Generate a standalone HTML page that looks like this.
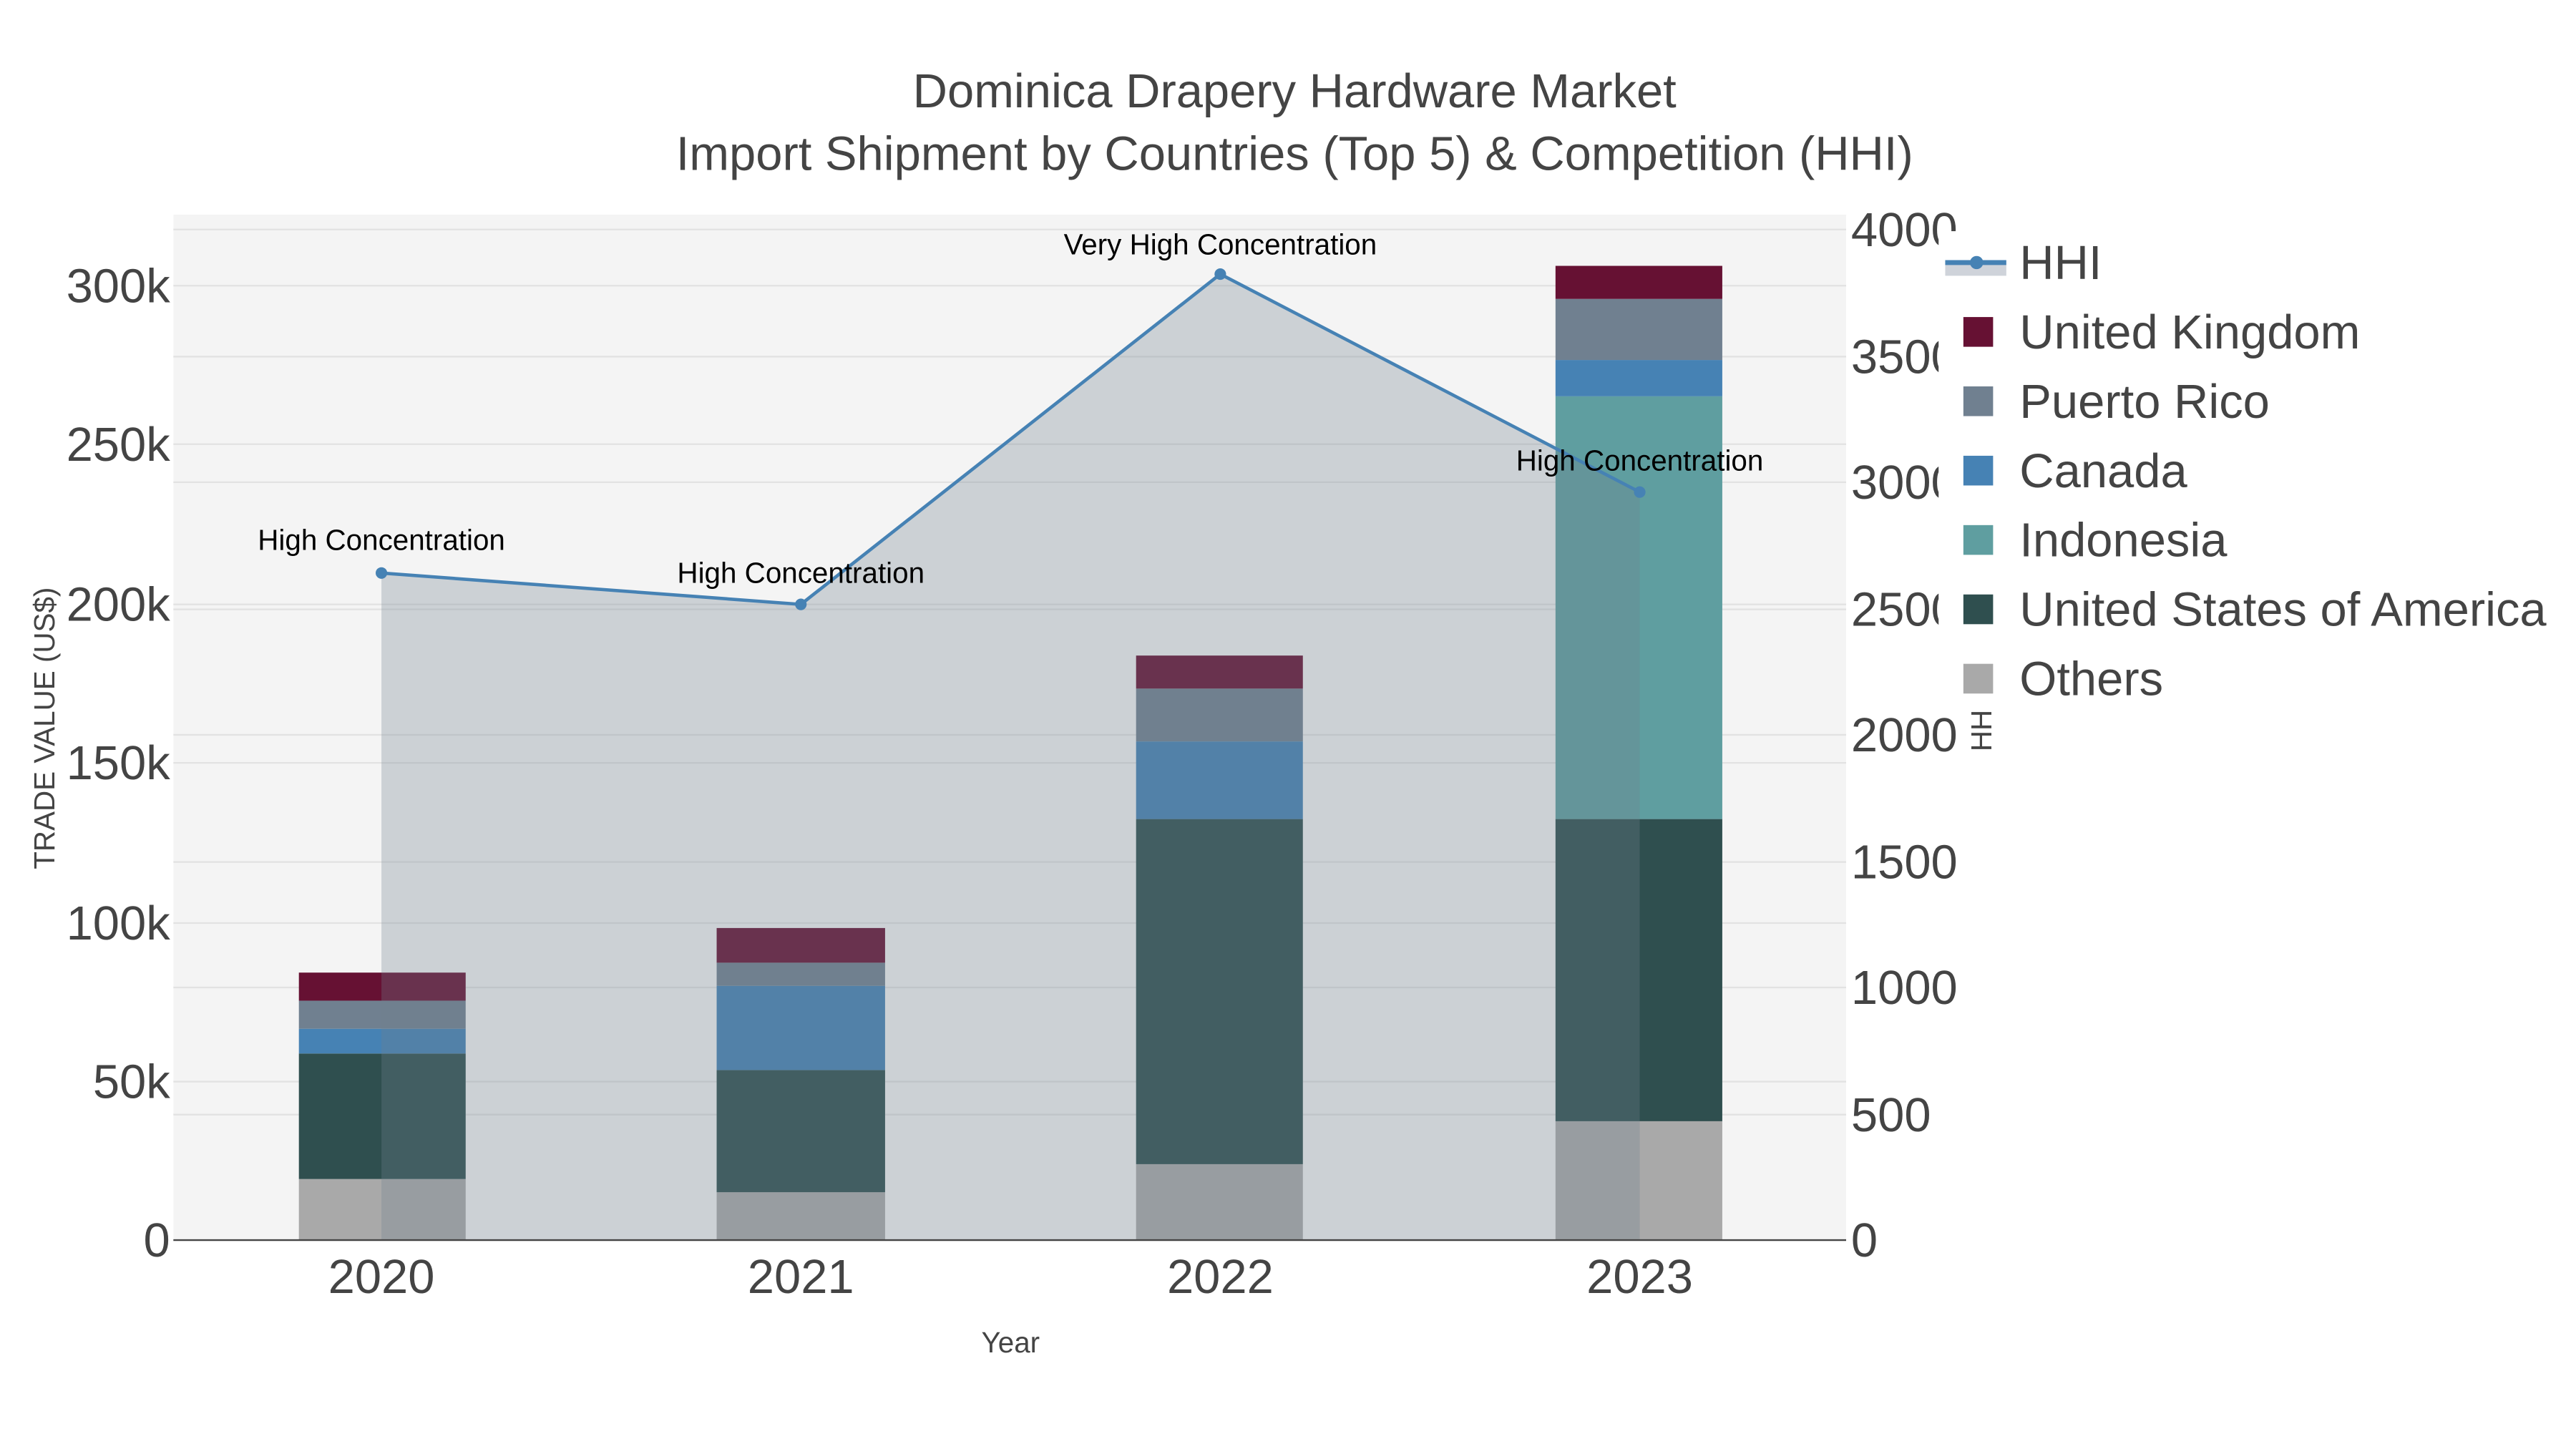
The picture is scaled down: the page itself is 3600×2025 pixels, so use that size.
<!DOCTYPE html>
<html><head><meta charset="utf-8"><style>html,body{margin:0;padding:0;background:#fff}svg{display:block}</style></head>
<body>
<svg width="3600" height="2025" viewBox="0 0 1560 877.5" xmlns="http://www.w3.org/2000/svg" font-family="Liberation Sans, Arial, sans-serif">
<rect width="1560" height="877.5" fill="#fff"/>
<rect x="105" y="130" width="1013" height="621" fill="#f4f4f4"/>
<g stroke="#e2e2e2" stroke-width="1">
<line x1="105" x2="1118" y1="655" y2="655"/><line x1="105" x2="1118" y1="559" y2="559"/><line x1="105" x2="1118" y1="462" y2="462"/><line x1="105" x2="1118" y1="366" y2="366"/><line x1="105" x2="1118" y1="269" y2="269"/><line x1="105" x2="1118" y1="173" y2="173"/>
<line x1="105" x2="1118" y1="675" y2="675"/><line x1="105" x2="1118" y1="598" y2="598"/><line x1="105" x2="1118" y1="522" y2="522"/><line x1="105" x2="1118" y1="445" y2="445"/><line x1="105" x2="1118" y1="369" y2="369"/><line x1="105" x2="1118" y1="292" y2="292"/><line x1="105" x2="1118" y1="216" y2="216"/><line x1="105" x2="1118" y1="139" y2="139"/>
</g>
<g>
<rect x="181" y="714" width="101" height="37" fill="#a9a9a9"/><rect x="181" y="638" width="101" height="76" fill="#2f4f4f"/><rect x="181" y="623" width="101" height="15" fill="#4682b4"/><rect x="181" y="606" width="101" height="17" fill="#708090"/><rect x="181" y="589" width="101" height="17" fill="#661133"/>
<rect x="434" y="722" width="102" height="29" fill="#a9a9a9"/><rect x="434" y="648" width="102" height="74" fill="#2f4f4f"/><rect x="434" y="597" width="102" height="51" fill="#4682b4"/><rect x="434" y="583" width="102" height="14" fill="#708090"/><rect x="434" y="562" width="102" height="21" fill="#661133"/>
<rect x="688" y="705" width="101" height="46" fill="#a9a9a9"/><rect x="688" y="496" width="101" height="209" fill="#2f4f4f"/><rect x="688" y="449" width="101" height="47" fill="#4682b4"/><rect x="688" y="417" width="101" height="32" fill="#708090"/><rect x="688" y="397" width="101" height="20" fill="#661133"/>
<rect x="942" y="679" width="101" height="72" fill="#a9a9a9"/><rect x="942" y="496" width="101" height="183" fill="#2f4f4f"/><rect x="942" y="240" width="101" height="256" fill="#5f9ea0"/><rect x="942" y="218" width="101" height="22" fill="#4682b4"/><rect x="942" y="181" width="101" height="37" fill="#708090"/><rect x="942" y="161" width="101" height="20" fill="#661133"/>
</g>
<polygon points="231,347 485,366 739,166 993,298 993,751 231,751" fill="rgba(112,128,144,0.3)"/>
<polyline points="231,347 485,366 739,166 993,298" fill="none" stroke="#4682b4" stroke-width="2"/>
<g fill="#4682b4"><circle cx="231" cy="347" r="3.5"/><circle cx="485" cy="366" r="3.5"/><circle cx="739" cy="166" r="3.5"/><circle cx="993" cy="298" r="3.5"/></g>
<line x1="105" x2="1118" y1="751" y2="751" stroke="#444" stroke-width="1"/>
<g font-size="17.5" fill="#000" text-anchor="middle">
<text x="231" y="333">High Concentration</text><text x="485" y="353">High Concentration</text><text x="739" y="154">Very High Concentration</text><text x="993" y="285">High Concentration</text>
</g>
<g font-size="29" fill="#444" text-anchor="end">
<text x="103" y="761">0</text><text x="103" y="665">50k</text><text x="103" y="569">100k</text><text x="103" y="472">150k</text><text x="103" y="376">200k</text><text x="103" y="279">250k</text><text x="103" y="183">300k</text>
</g>
<g font-size="29" fill="#444">
<text x="1121" y="761">0</text><text x="1121" y="685">500</text><text x="1121" y="608">1000</text><text x="1121" y="532">1500</text><text x="1121" y="455">2000</text><text x="1121" y="379">2500</text><text x="1121" y="302">3000</text><text x="1121" y="226">3500</text><text x="1121" y="149">4000</text>
</g>
<g font-size="29" fill="#444" text-anchor="middle">
<text x="231" y="783">2020</text><text x="485" y="783">2021</text><text x="739" y="783">2022</text><text x="993" y="783">2023</text>
</g>
<text x="612" y="819" font-size="17.5" fill="#444" text-anchor="middle">Year</text>
<text transform="translate(33,441) rotate(-90)" font-size="17.5" fill="#444" text-anchor="middle">TRADE VALUE (US$)</text>
<text transform="translate(1206,440) rotate(-90)" font-size="17.5" fill="#444" text-anchor="middle">HHI</text>
<g font-size="29" fill="#444" text-anchor="middle">
<text x="784" y="65">Dominica Drapery Hardware Market</text>
<text x="784" y="103">Import Shipment by Countries (Top 5) &amp; Competition (HHI)</text>
</g>
<rect x="1174" y="140" width="386" height="290" fill="#fff"/>
<rect x="1178" y="160" width="37" height="7" fill="#cfd3da"/>
<line x1="1178" x2="1215" y1="159" y2="159" stroke="#4682b4" stroke-width="3"/>
<circle cx="1197" cy="159" r="4" fill="#4682b4"/>
<g>
<rect x="1189" y="192" width="18" height="18" fill="#661133"/>
<rect x="1189" y="234" width="18" height="18" fill="#708090"/>
<rect x="1189" y="276" width="18" height="18" fill="#4682b4"/>
<rect x="1189" y="318" width="18" height="18" fill="#5f9ea0"/>
<rect x="1189" y="360" width="18" height="18" fill="#2f4f4f"/>
<rect x="1189" y="402" width="18" height="18" fill="#a9a9a9"/>
</g>
<g font-size="29" fill="#444">
<text x="1223" y="169">HHI</text><text x="1223" y="211">United Kingdom</text><text x="1223" y="253">Puerto Rico</text><text x="1223" y="295">Canada</text><text x="1223" y="337">Indonesia</text><text x="1223" y="379">United States of America</text><text x="1223" y="421">Others</text>
</g>
</svg>
</body></html>
